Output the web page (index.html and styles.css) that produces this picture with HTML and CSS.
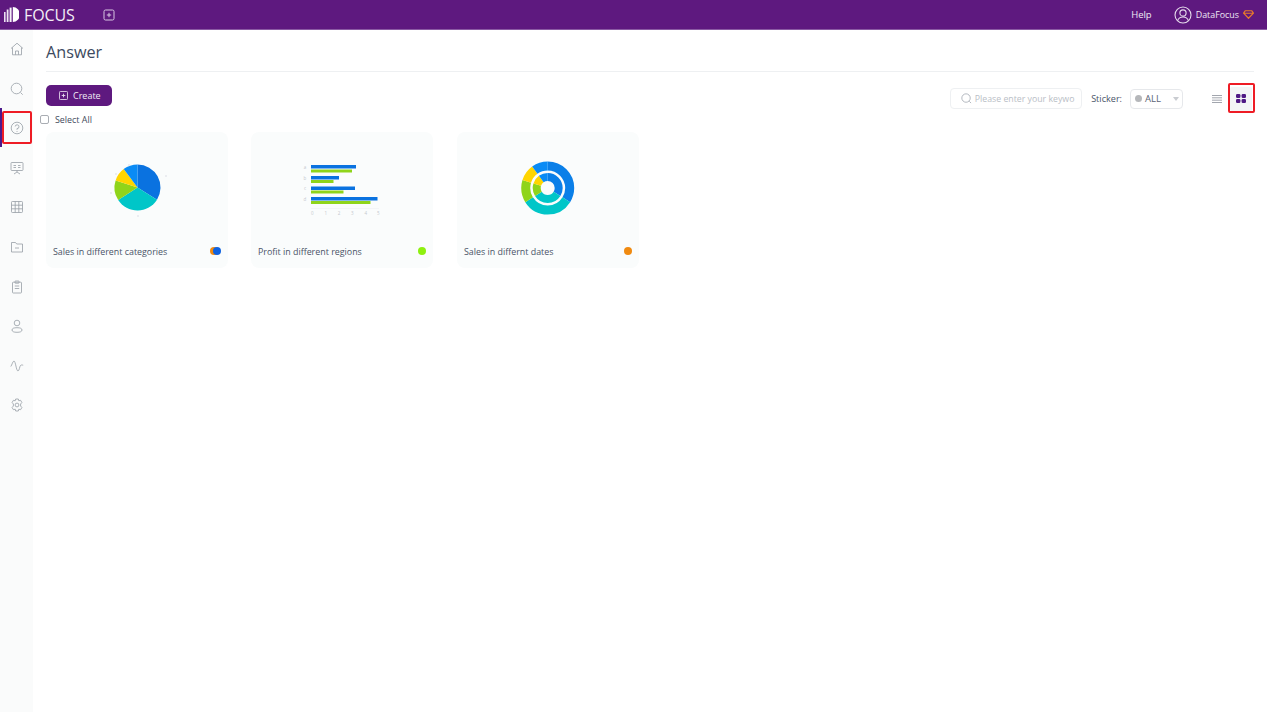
FILE: index.html
```html
<!DOCTYPE html>
<html lang="en">
<head>
<meta charset="utf-8">
<title>Answer</title>
<link rel="stylesheet" href="styles.css">
</head>
<body>
<header class="topbar">
  <div class="brand">
    <svg class="logo" viewBox="0 0 15 15"><rect x="0" y="5" width="1.6" height="10" fill="#e9dff0"/><rect x="2.7" y="2.5" width="1.8" height="12.5" fill="#eee6f3"/><rect x="5.6" y="0.6" width="2" height="14.4" fill="#f4eff7"/><path d="M8.8 0a7.2 7.5 0 0 1 0 15z" fill="#fff"/></svg>
    <span class="brand-name">FOCUS</span>
  </div>
  <svg class="top-plus" viewBox="0 0 12 12"><rect x="1" y="1" width="10" height="10" rx="1.5" fill="none" stroke="#d9c8e3"/><path d="M3.8 6h4.400M6 3.800v4.400" stroke="#d9c8e3"/></svg>
  <div class="top-right">
    <span class="help">Help</span>
    <svg class="avatar" viewBox="0 0 18 18"><circle cx="9" cy="9" r="8" fill="none" stroke="#e6dcec" stroke-width="1.1"/><circle cx="9" cy="7" r="3.1" fill="none" stroke="#e6dcec" stroke-width="1.1"/><path d="M3.6 14.600c1-2.600 3-3.600 5.400-3.600s4.400 1 5.400 3.600" fill="none" stroke="#e6dcec" stroke-width="1.1"/></svg>
    <span class="user">DataFocus</span>
    <svg class="gem" viewBox="0 0 12 10"><path d="M2.500 .8h7l2 2.700L6 9.200.5 3.500zM.8 3.600h10.400" fill="none" stroke="#e8792b" stroke-width="1.300" stroke-linejoin="round"/></svg>
  </div>
</header>
<div class="app">
  <nav class="sidebar">
    <svg class="nav-icon" viewBox="0 0 14 14"><path d="M1 6.500 7 1.200l6 5.300M2.500 5.500v7.300h9V5.500M5.500 12.800V9h3v3.800"/></svg>
    <svg class="nav-icon" viewBox="0 0 14 14"><circle cx="6.500" cy="6.500" r="5.300"/><path d="m10.500 10.500 2.200 2.200"/></svg>
    <div class="nav-active">
      <svg class="nav-icon" viewBox="0 0 14 14"><circle cx="7" cy="7" r="5.800"/><path d="M5.200 5.500A1.900 1.900 0 1 1 7 7.600v1.200M7 10v.9"/></svg>
      <span class="active-bar"></span>
      <span class="mark mark-nav"></span>
    </div>
    <svg class="nav-icon" viewBox="0 0 14 14"><rect x="1" y="1.500" width="12" height="8" rx=".8"/><path d="M3.500 4.500h2.500M3.500 6.500h2.500M8 4.500h2.500M8 6.500h2.500M7 9.500v1.500M4 13l3-2 3 2"/></svg>
    <svg class="nav-icon" viewBox="0 0 14 14"><rect x="1.500" y="1.500" width="11" height="11" rx=".8"/><path d="M1.500 5.200h11M1.500 8.800h11M5.200 1.500v11M8.800 1.500v11"/></svg>
    <svg class="nav-icon" viewBox="0 0 14 14"><path d="M1.500 2.500h4l1.200 1.500h5.800v8h-11zM5 8h4"/></svg>
    <svg class="nav-icon" viewBox="0 0 14 14"><rect x="2.500" y="2.200" width="9" height="10.800" rx=".8"/><rect x="5" y="1" width="4" height="2.200" rx=".4"/><path d="M4.800 6h4.400M4.800 8.500h4.400"/></svg>
    <svg class="nav-icon" viewBox="0 0 14 14"><circle cx="7" cy="4" r="2.800"/><ellipse cx="7" cy="11" rx="5" ry="2.300"/></svg>
    <svg class="nav-icon" viewBox="0 0 14 14"><path d="M.8 7.500C2 6 2.800 2 4 2c1.600 0 2.200 10 4 10 1.300 0 1.500-4.500 2.500-5.500.8-.8 1.800-.5 2.700-.3"/></svg>
    <svg class="nav-icon" viewBox="0 0 14 14"><path d="M5.700 1h2.600l.5 1.800 1.800-.5 1.300 2.200L10.600 6v2l1.300 1.500-1.300 2.200-1.800-.5L8.300 13H5.700l-.5-1.800-1.800.5-1.300-2.200L3.400 8V6L2.100 4.500l1.300-2.200 1.800.5z"/><circle cx="7" cy="7" r="1.900"/></svg>
  </nav>
  <main class="main">
    <h1 class="title">Answer</h1>
    <div class="toolbar">
      <button class="create">
        <svg class="create-icon" viewBox="0 0 10 10"><rect x=".5" y=".5" width="9" height="9" rx="1" fill="none" stroke="#e8dcee"/><path d="M3 5h4M5 3v4" stroke="#e8dcee"/></svg>
        Create
      </button>
      <div class="tools">
        <div class="search">
          <svg class="search-icon" viewBox="0 0 12 12"><circle cx="5.500" cy="5.500" r="4.600"/><path d="m9 9 2 2"/></svg>
          <span class="placeholder">Please enter your keywo</span>
        </div>
        <span class="sticker-label">Sticker:</span>
        <div class="select">
          <span class="select-dot"></span>
          <span class="select-text">ALL</span>
          <span class="caret"></span>
        </div>
        <svg class="list-icon" viewBox="0 0 10 8"><path d="M0 .5h10M0 2.800h10M0 5.200h10M0 7.500h10" stroke="#8a8f99" stroke-width=".8"/></svg>
        <div class="grid-btn">
          <svg class="grid-icon" viewBox="0 0 10 9"><rect width="4.400" height="4" rx="1.200"/><rect x="5.600" width="4.400" height="4" rx="1.200"/><rect y="5" width="4.400" height="4" rx="1.200"/><rect x="5.600" y="5" width="4.400" height="4" rx="1.200"/></svg>
          <span class="mark mark-grid"></span>
        </div>
      </div>
    </div>
    <label class="select-all"><span class="checkbox"></span>Select All</label>
    <section class="cards">
      <article class="card">
        <div class="thumb">
          <svg class="chart" viewBox="0 0 182 104">
            <path d="M91.500 32.500 A23 23 0 0 1 111 67.700 L91.500 55.500Z" fill="#0a72e0"/>
            <path d="M91.500 55.500 L111 67.700 A23 23 0 0 1 72.200 68 Z" fill="#00c6c8"/>
            <path d="M91.500 55.500 L72.200 68 A23 23 0 0 1 69.600 48.400 Z" fill="#8fd41a"/>
            <path d="M91.500 55.500 L69.600 48.400 A23 23 0 0 1 77.700 37.100 Z" fill="#ffd500"/>
            <path d="M91.500 55.500 L77.700 37.100 A23 23 0 0 1 91.500 32.500 Z" fill="#0a8bf5"/>
            <g fill="#e6e9ee"><circle cx="120" cy="44" r="1"/><circle cx="92" cy="84" r="1"/><circle cx="65" cy="61" r="1"/><circle cx="70" cy="42" r="1"/><circle cx="83" cy="33" r="1"/></g>
          </svg>
        </div>
        <div class="card-foot">
          <span class="card-name">Sales in different categories</span>
          <span class="dots"><span class="dot dot-orange dot-back"></span><span class="dot dot-blue dot-front"></span></span>
        </div>
      </article>
      <article class="card">
        <div class="thumb">
          <svg class="chart" viewBox="0 0 182 104">
            <g fill="#0a72e0">
              <rect x="60" y="33" width="45" height="3.500"/>
              <rect x="60" y="44" width="28" height="3.500"/>
              <rect x="60" y="54.500" width="44" height="3.500"/>
              <rect x="60" y="65" width="66.500" height="3.500"/>
            </g>
            <g fill="#8fd41a">
              <rect x="60" y="37.500" width="41" height="3"/>
              <rect x="60" y="48" width="22.500" height="3"/>
              <rect x="60" y="58.500" width="32.500" height="3"/>
              <rect x="60" y="69" width="59.500" height="3"/>
            </g>
            <path d="M60 76.500h68" stroke="#eef0f3" stroke-width=".6"/>
            <g class="tick">
              <text x="54" y="36.500">a</text><text x="54" y="47.500">b</text><text x="54" y="58">c</text><text x="54" y="68.500">d</text>
              <text x="61.300" y="83">0</text><text x="74.700" y="83">1</text><text x="88" y="83">2</text><text x="101.300" y="83">3</text><text x="114.700" y="83">4</text><text x="127.300" y="83">5</text>
            </g>
          </svg>
        </div>
        <div class="card-foot">
          <span class="card-name">Profit in different regions</span>
          <span class="dot dot-lime"></span>
        </div>
      </article>
      <article class="card">
        <div class="thumb">
          <svg class="chart" viewBox="0 0 182 104">
            <g fill="none" stroke-width="9" transform="rotate(-90 90.700 56)">
              <circle cx="90.700" cy="56" r="22" pathLength="100" stroke="#0a7fe8" stroke-dasharray="34 66"/>
              <circle cx="90.700" cy="56" r="22" pathLength="100" stroke="#00c6c8" stroke-dasharray="32 68" stroke-dashoffset="-34"/>
              <circle cx="90.700" cy="56" r="22" pathLength="100" stroke="#8fd41a" stroke-dasharray="14 86" stroke-dashoffset="-66"/>
              <circle cx="90.700" cy="56" r="22" pathLength="100" stroke="#ffd500" stroke-dasharray="10 90" stroke-dashoffset="-80"/>
              <circle cx="90.700" cy="56" r="22" pathLength="100" stroke="#0a8bf5" stroke-dasharray="10 90" stroke-dashoffset="-90"/>
            </g>
            <g fill="none" stroke-width="8" transform="rotate(-90 90.700 56)">
              <circle cx="90.700" cy="56" r="11" pathLength="100" stroke="#0a7fe8" stroke-dasharray="34 66"/>
              <circle cx="90.700" cy="56" r="11" pathLength="100" stroke="#00c6c8" stroke-dasharray="32 68" stroke-dashoffset="-34"/>
              <circle cx="90.700" cy="56" r="11" pathLength="100" stroke="#8fd41a" stroke-dasharray="14 86" stroke-dashoffset="-66"/>
              <circle cx="90.700" cy="56" r="11" pathLength="100" stroke="#ffd500" stroke-dasharray="10 90" stroke-dashoffset="-80"/>
              <circle cx="90.700" cy="56" r="11" pathLength="100" stroke="#0a8bf5" stroke-dasharray="10 90" stroke-dashoffset="-90"/>
            </g>
          </svg>
        </div>
        <div class="card-foot">
          <span class="card-name">Sales in differnt dates</span>
          <span class="dot dot-amber"></span>
        </div>
      </article>
    </section>
  </main>
</div>
</body>
</html>
```
FILE: styles.css
```css
* { box-sizing: border-box; }
html, body { margin: 0; height: 100%; }
body {
  display: flex;
  flex-direction: column;
  height: 712px;
  overflow: hidden;
  background: #fff;
  font-family: "Open Sans", "Noto Sans", sans-serif;
  color: #4a5468;
}
.topbar {
  flex: 0 0 30px;
  display: flex;
  align-items: center;
  background: #5e197f;
  border-bottom: 1px solid #8a5aa3;
  padding: 0 13px 0 4px;
  color: #fff;
}
.brand { display: flex; align-items: center; gap: 5px; }
.logo { width: 15px; height: 15px; display: block; }
.brand-name { font-size: 16px; letter-spacing: -0.1px; color: #f3edf6; line-height: 1; }
.top-plus { width: 12px; height: 12px; margin-left: 28px; }
.top-right { margin-left: auto; display: flex; align-items: center; }
.help { font-size: 9.500px; color: #efe8f3; }
.avatar { width: 18px; height: 18px; margin-left: 22px; }
.user { font-size: 8.900px; margin-left: 4px; color: #efe8f3; }
.gem { width: 11px; height: 9px; margin-left: 4px; }
.app { flex: 1; display: flex; min-height: 0; }
.sidebar {
  flex: 0 0 33px;
  background: #fafbfb;
  display: flex;
  flex-direction: column;
  align-items: center;
  gap: 25.600px;
  padding-top: 12px;
}
.nav-icon {
  width: 14px;
  height: 14px;
  display: block;
  fill: none;
  stroke: #979ea6;
  stroke-width: .8;
}
.nav-active { position: relative; width: 14px; height: 14px; margin-left: 1px; }
.active-bar { position: absolute; left: -10px; top: -13px; width: 2px; height: 39px; background: #4b1a8c; }
.mark { position: absolute; border: 2px solid #ee1c25; }
.mark-nav { left: -8px; top: -10px; width: 30px; height: 33px; border-radius: 2px; }
.main { flex: 1; min-width: 0; padding: 0 13px; position: relative; }
.title {
  margin: 0;
  height: 42px;
  border-bottom: 1px solid #eef0f2;
  font-size: 16.200px;
  font-weight: 400;
  line-height: 44px;
  color: #3c4a60;
}
.toolbar { display: flex; justify-content: space-between; align-items: flex-start; margin-top: 13px; height: 25px; }
.create {
  display: flex;
  align-items: center;
  gap: 5px;
  width: 66px;
  height: 21px;
  padding: 0 0 0 13px;
  border: 0;
  border-radius: 5px;
  background: #5e197f;
  color: #f1eaf5;
  font: 9px "Open Sans", sans-serif;
}
.create-icon { width: 9px; height: 9px; }
.tools { display: flex; align-items: center; padding-top: 2px; height: 25px; }
.search {
  display: flex;
  align-items: center;
  width: 132px;
  height: 21px;
  border: 1px solid #eef0f2;
  border-radius: 4px;
  padding-left: 10px;
  gap: 3px;
}
.search-icon { width: 11px; height: 11px; fill: none; stroke: #9aa1aa; stroke-width: .8; }
.placeholder { font-size: 8.750px; color: #b9bec6; white-space: nowrap; }
.sticker-label { font-size: 9.100px; margin-left: 9.300px; color: #4a5468; }
.select {
  display: flex;
  align-items: center;
  width: 53px;
  height: 20px;
  margin-left: 8px;
  border: 1px solid #e6e8eb;
  border-radius: 4px;
  padding-left: 4px;
}
.select-dot { width: 7px; height: 7px; border-radius: 50%; background: #b5b7ba; }
.select-text { font-size: 9.500px; margin-left: 3px; color: #5a6475; }
.caret { margin-left: 12px; border: 3px solid transparent; border-top: 4px solid #c9ccd1; border-bottom: 0; }
.list-icon { width: 10px; height: 8px; margin-left: 29px; }
.grid-btn {
  position: relative;
  display: flex;
  align-items: center;
  justify-content: center;
  width: 22px;
  height: 24px;
  margin-left: 8px;
  margin-right: 2px;
  background: #f3f5f6;
  border-radius: 2px;
}
.grid-icon { width: 10px; height: 9px; fill: #4f1a85; }
.mark-grid { left: -2px; top: -4px; width: 27px; height: 30px; border-radius: 2px; }
.select-all {
  display: flex;
  align-items: center;
  height: 12px;
  margin: 3px 0 0 -6px;
  font-size: 8.900px;
  gap: 6px;
  color: #3f4a5c;
}
.checkbox { width: 9px; height: 9px; border: 1px solid #a9adb3; border-radius: 2px; background: #fff; }
.cards { display: flex; gap: 23px; margin-top: 7px; }
.card {
  width: 182px;
  height: 136px;
  background: #fafcfc;
  border-radius: 8px;
  display: flex;
  flex-direction: column;
}
.card:last-child { margin-left: 1px; }
.thumb { flex: 0 0 104px; }
.chart { width: 182px; height: 104px; display: block; }
.tick text { font-size: 4.500px; fill: #c4c8ce; text-anchor: middle; font-family: "Open Sans", sans-serif; }
.card-foot {
  flex: 1;
  display: flex;
  align-items: center;
  justify-content: space-between;
  padding: 0 7px 2px 7px;
}
.card-name { font-size: 8.900px; color: #4a5468; white-space: nowrap; }
.dots { position: relative; width: 11px; height: 8px; }
.dot { display: block; width: 8px; height: 8px; border-radius: 50%; }
.dot-back { position: absolute; left: 0; top: 0; }
.dot-front { position: absolute; left: 3px; top: 0; }
.dot-orange { background: #f08a10; }
.dot-blue { background: #0f62e0; }
.dot-lime { background: #8ef00f; }
.dot-amber { background: #f08a10; }
```
